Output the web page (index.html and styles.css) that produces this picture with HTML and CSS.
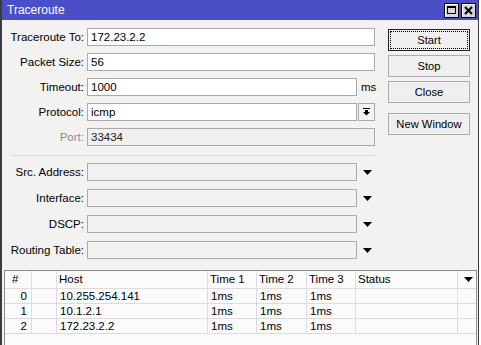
FILE: index.html
```html
<!DOCTYPE html>
<html>
<head>
<meta charset="utf-8">
<link rel="stylesheet" href="styles.css">
</head>
<body>
<div class="window">
  <div class="titlebar">
    <span class="title">Traceroute</span>
    <div class="tb-btns">
      <span class="tb-btn"><span class="max-icon"></span></span>
      <span class="tb-btn"><svg width="9" height="9" viewBox="0 0 9 9"><path d="M1 1L8 8M8 1L1 8" stroke="#000" stroke-width="2"/></svg></span>
    </div>
  </div>
  <div class="main">
    <div class="form">
      <div class="group">
        <div class="row"><label class="lbl">Traceroute To:</label><div class="inp full">172.23.2.2</div></div>
        <div class="row"><label class="lbl">Packet Size:</label><div class="inp full">56</div></div>
        <div class="row"><label class="lbl">Timeout:</label><div class="inp">1000</div><span class="unit">ms</span></div>
        <div class="row"><label class="lbl">Protocol:</label><div class="inp">icmp</div>
          <span class="ddbtn"><svg width="7" height="8" viewBox="0 0 7 8"><rect x="0" y="0" width="7" height="1" fill="#000"/><rect x="2" y="2" width="3" height="2" fill="#000"/><path d="M0 4H7L3.5 7.5Z" fill="#000"/></svg></span></div>
        <div class="row"><label class="lbl dis">Port:</label><div class="inp full disabled">33434</div></div>
      </div>
      <div class="sep"></div>
      <div class="group g2">
        <div class="row"><label class="lbl">Src. Address:</label><div class="inp empty"></div><span class="arrow"><svg width="9" height="5" viewBox="0 0 9 5"><path d="M0 0H9L4.5 5Z" fill="#000"/></svg></span></div>
        <div class="row"><label class="lbl">Interface:</label><div class="inp empty"></div><span class="arrow"><svg width="9" height="5" viewBox="0 0 9 5"><path d="M0 0H9L4.5 5Z" fill="#000"/></svg></span></div>
        <div class="row"><label class="lbl">DSCP:</label><div class="inp empty"></div><span class="arrow"><svg width="9" height="5" viewBox="0 0 9 5"><path d="M0 0H9L4.5 5Z" fill="#000"/></svg></span></div>
        <div class="row"><label class="lbl">Routing Table:</label><div class="inp empty"></div><span class="arrow"><svg width="9" height="5" viewBox="0 0 9 5"><path d="M0 0H9L4.5 5Z" fill="#000"/></svg></span></div>
      </div>
    </div>
    <div class="buttons">
      <div class="btn default"><span>Start</span></div>
      <div class="btn">Stop</div>
      <div class="btn">Close</div>
      <div class="btn spaced">New Window</div>
    </div>
  </div>
  <div class="list">
    <div class="lrow head">
      <div class="c c-num">#</div>
      <div class="c"></div>
      <div class="c">Host</div>
      <div class="c">Time 1</div>
      <div class="c">Time 2</div>
      <div class="c">Time 3</div>
      <div class="c">Status</div>
      <div class="c c-menu"><svg width="9" height="5" viewBox="0 0 9 5"><path d="M0 0H9L4.5 5Z" fill="#000"/></svg></div>
    </div>
    <div class="lrow">
      <div class="c c-num r">0</div><div class="c"></div><div class="c host">10.255.254.141</div><div class="c t">1ms</div><div class="c t">1ms</div><div class="c t">1ms</div><div class="c"></div><div class="c"></div>
    </div>
    <div class="lrow">
      <div class="c c-num r">1</div><div class="c"></div><div class="c host">10.1.2.1</div><div class="c t">1ms</div><div class="c t">1ms</div><div class="c t">1ms</div><div class="c"></div><div class="c"></div>
    </div>
    <div class="lrow">
      <div class="c c-num r">2</div><div class="c"></div><div class="c host">172.23.2.2</div><div class="c t">1ms</div><div class="c t">1ms</div><div class="c t">1ms</div><div class="c"></div><div class="c"></div>
    </div>
  </div>
</div>
</body>
</html>
```
FILE: styles.css
```css
* { box-sizing: border-box; }
body {
  margin: 0;
  background: #ffffff;
  font-family: "Liberation Sans", Arial, sans-serif;
  font-size: 11.5px;
  color: #000;
}
.window {
  width: 479px;
  height: 345px;
  border-left: 2px solid #3c3c3c;
  border-right: 1px solid #3c3c3c;
  background: #f2f2f0;
  display: flex;
  flex-direction: column;
  overflow: hidden;
}
.titlebar {
  height: 20px;
  flex: none;
  background: #4b4fc7;
  color: #fff;
  display: flex;
  align-items: center;
  justify-content: space-between;
  padding: 0 2px 0 5px;
}
.title { font-size: 12px; }
.tb-btns { display: flex; gap: 2px; }
.tb-btn {
  width: 15px;
  height: 15px;
  border: 1px solid #000;
  background: #d6d6d6;
  box-shadow: inset 1px 1px #fff;
  display: flex;
  align-items: center;
  justify-content: center;
}
.max-icon {
  width: 9px;
  height: 8px;
  border: 1px solid #000;
  border-top-width: 2px;
}
.main {
  display: flex;
  padding-top: 8px;
}
.form { width: 373px; }
.group { display: flex; flex-direction: column; gap: 7px; }
.group.g2 { gap: 8px; }
.row {
  display: grid;
  grid-template-columns: 85px 1fr 18px;
  height: 18px;
  align-items: center;
}
.lbl {
  text-align: right;
  padding-right: 3px;
  white-space: nowrap;
}
.lbl.dis { color: #8c8c8c; }
.inp {
  height: 18px;
  border: 1px solid #aaaaaa;
  background: #fff;
  padding-left: 3px;
  line-height: 16px;
  white-space: nowrap;
}
.inp.full { grid-column: 2 / 4; }
.inp.disabled { background: #f0f0ee; color: #222; }
.inp.empty { background: #f2f2f0; }
.unit { padding-left: 4px; }
.ddbtn {
  margin-left: 1px;
  height: 18px;
  border: 1px solid #aaaaaa;
  background: #f4f4f4;
  display: flex;
  align-items: center;
  justify-content: center;
}
.arrow {
  display: flex;
  align-items: center;
  padding-left: 6px;
}
.sep {
  height: 1px;
  background: #dcdcdc;
  margin: 9px 0 7px 9px;
}
.buttons {
  margin-left: 13px;
  width: 82px;
  display: flex;
  flex-direction: column;
  gap: 4px;
  padding-top: 1px;
}
.btn {
  height: 22px;
  border: 1px solid #adadad;
  background: #efefef;
  display: flex;
  align-items: center;
  justify-content: center;
  font-size: 11.2px;
}
.btn.default {
  border-color: #222;
  padding: 1px;
}
.btn.default span {
  flex: 1;
  align-self: stretch;
  border: 1px dotted #000;
  display: flex;
  align-items: center;
  justify-content: center;
}
.btn.spaced { margin-top: 6px; }
.list {
  margin: 11px 0 0 2px;
  width: 473px;
  flex: 1;
  border: 1px solid #8e8e8e;
  border-bottom: none;
  background: #fbfbfb;
}
.lrow {
  display: grid;
  grid-template-columns: 27px 25px 151px 49px 50px 49px 102px 18px;
  height: 15px;
  line-height: 14px;
}
.lrow.head {
  height: 18px;
  line-height: 17px;
}
.c {
  border-right: 1px solid #dcdcdc;
  border-bottom: 1px solid #dcdcdc;
  padding-left: 2px;
  white-space: nowrap;
  overflow: hidden;
}
.c:last-child { border-right: none; }
.head .c { padding-left: 2px; }
.head .c-num { padding-left: 7px; }
.c-num.r { text-align: right; padding-right: 4px; }
.host { padding-left: 3px; }
.t { padding-left: 3px; }
.c-menu {
  display: flex;
  align-items: center;
  justify-content: center;
}
```
